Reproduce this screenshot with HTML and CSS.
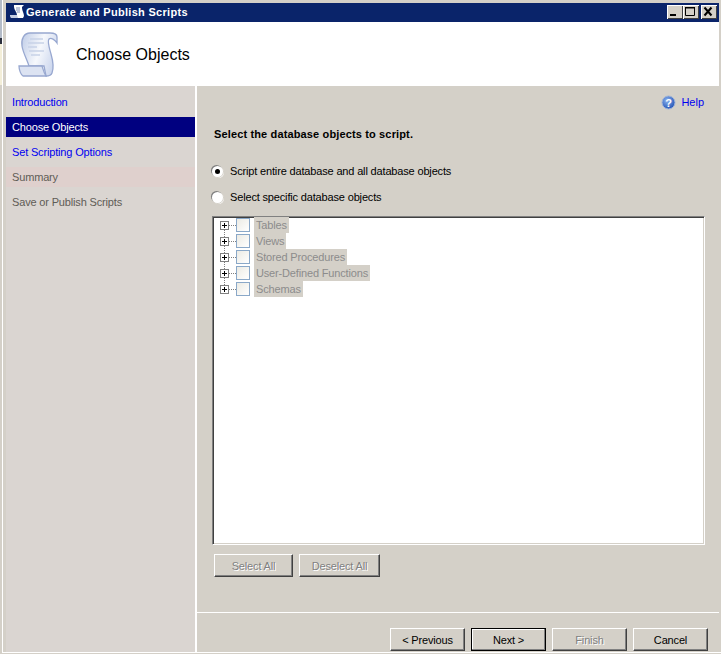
FILE: index.html
```html
<!DOCTYPE html>
<html lang="en">
<head>
<meta charset="utf-8">
<title>Generate and Publish Scripts</title>
<link rel="stylesheet" href="styles.css">
</head>
<body>
<div class="desktop">
  <div class="behind"></div>
  <div class="window">
    <div class="titlebar">
      <svg class="title-icon" width="16" height="16" viewBox="0 0 16 16">
        <path d="M5 1h10l-2 2v1c0 3 2 5 2 8l-1 2H2l-1-3h7c0-3-3-5-3-8z" fill="#fff"/>
        <path d="M7 4h4M7 6h4M8 8h3" stroke="#7f8fb8" stroke-width="1"/>
        <path d="M1 11h7l1 3H2z" fill="#c4cde2"/>
      </svg>
      <span class="title-text">Generate and Publish Scripts</span>
      <div class="window-controls">
        <span class="win-btn">
          <svg width="15" height="13" viewBox="0 0 15 13"><path d="M3 9h6v2H3z" fill="#000"/></svg>
        </span>
        <span class="win-btn">
          <svg width="15" height="13" viewBox="0 0 15 13"><path d="M2.500 2.500h9v8h-9z" fill="none" stroke="#000"/><path d="M2 2h10v1.500H2z" fill="#000"/></svg>
        </span>
        <span class="win-btn win-btn-close">
          <svg width="15" height="13" viewBox="0 0 15 13"><path d="M3.500 2.500l7 8M10.500 2.500l-7 8" stroke="#000" stroke-width="2"/></svg>
        </span>
      </div>
    </div>
    <header class="banner">
      <svg class="banner-icon" width="40" height="45" viewBox="0 0 40 45">
        <defs>
          <linearGradient id="paper" x1="0" y1="0.2" x2="1" y2="0.6">
            <stop offset="0" stop-color="#c6d2ea"/>
            <stop offset="0.5" stop-color="#f6f8fc"/>
            <stop offset="1" stop-color="#c9d4ec"/>
          </linearGradient>
        </defs>
        <path d="M12 1H32C36 1 39 2 39 5V11C37 8 33 5 31 7C29 9 31 15 33 22C35 29 36 36 34 41C33 44 30 44 28 44L26 34H11C9 27 5 21 4 14C3 7 6 1 12 1Z" fill="url(#paper)" stroke="#98a8d0" stroke-width="1.300"/>
        <path d="M1 34H24C25 37 26 41 28 44H5C3 43 1 38 1 34Z" fill="#dce3f2" stroke="#98a8d0" stroke-width="1.300"/>
        <path d="M12 7h13M10 11h16M10 15h9M11 19h15M13 23h9" stroke="#c8d2e8" stroke-width="1.300"/>
      </svg>
      <h1 class="banner-title">Choose Objects</h1>
    </header>
    <div class="content">
      <nav class="sidebar">
        <a class="step step-link">Introduction</a>
        <a class="step step-current">Choose Objects</a>
        <a class="step step-link">Set Scripting Options</a>
        <a class="step step-off step-tint">Summary</a>
        <a class="step step-off">Save or Publish Scripts</a>
      </nav>
      <main class="panel">
        <div class="help-row">
          <svg width="15" height="15" viewBox="0 0 15 15">
            <defs>
              <radialGradient id="helpball" cx="0.4" cy="0.35" r="0.7">
                <stop offset="0" stop-color="#8db4ee"/>
                <stop offset="1" stop-color="#1f4fb4"/>
              </radialGradient>
            </defs>
            <circle cx="7.500" cy="7.500" r="6.500" fill="url(#helpball)" stroke="#9fb4d8"/>
            <text class="help-mark" x="7.500" y="11.500" text-anchor="middle">?</text>
          </svg>
          <a class="help-link">Help</a>
        </div>
        <h2 class="prompt">Select the database objects to script.</h2>
        <label class="radio-row">
          <span class="radio radio-on"></span>Script entire database and all database objects
        </label>
        <label class="radio-row radio-row-second">
          <span class="radio"></span>Select specific database objects
        </label>
        <div class="tree">
          <div class="tree-row"><span class="expander"></span><span class="dots"></span><span class="check"></span><span class="node">Tables</span></div>
          <div class="tree-row"><span class="expander"></span><span class="dots"></span><span class="check"></span><span class="node">Views</span></div>
          <div class="tree-row"><span class="expander"></span><span class="dots"></span><span class="check"></span><span class="node">Stored Procedures</span></div>
          <div class="tree-row"><span class="expander"></span><span class="dots"></span><span class="check"></span><span class="node">User-Defined Functions</span></div>
          <div class="tree-row"><span class="expander"></span><span class="dots"></span><span class="check"></span><span class="node">Schemas</span></div>
        </div>
        <div class="tree-actions">
          <button class="btn btn-off btn-select" disabled>Select All</button>
          <button class="btn btn-off btn-deselect" disabled>Deselect All</button>
        </div>
        <footer class="footer">
          <button class="btn btn-nav">&lt; Previous</button>
          <button class="btn btn-nav btn-default">Next &gt;</button>
          <button class="btn btn-nav btn-off" disabled>Finish</button>
          <button class="btn btn-nav">Cancel</button>
        </footer>
      </main>
    </div>
  </div>
</div>
</body>
</html>
```
FILE: styles.css
```css
* {
  box-sizing: border-box;
}

html,
body {
  margin: 0;
  height: 100%;
  overflow: hidden;
}

body {
  font-family: "Liberation Sans", Arial, sans-serif;
  font-size: 11px;
  letter-spacing: -0.16px;
  color: #000;
  background: #d4d0c8;
}

.desktop {
  display: flex;
  width: 721px;
  height: 654px;
  background: #d4d0c8;
}

.behind {
  flex: 0 0 2px;
  height: 100%;
  background: linear-gradient(#b4bcc8 0, #b4bcc8 38px, #2a2e3c 38px, #2a2e3c 44px, #f3eed8 44px, #f3eed8 85px, #d4d0c8 85px);
}

.window {
  flex: 0 0 719px;
  display: flex;
  flex-direction: column;
  height: 653px;
  padding: 3px 2px 0 3px;
  border-left: 1px solid #fff;
  border-bottom: 1px solid #fff;
  background: #d4d0c8;
}

.titlebar {
  display: flex;
  align-items: center;
  flex: 0 0 19px;
  padding: 0 2px 1px 3px;
  background: #0a246a;
  color: #fff;
}

.title-icon {
  flex: none;
  margin-right: 1px;
}

.title-text {
  font-weight: 700;
  font-size: 11px;
  letter-spacing: 0.3px;
  white-space: nowrap;
}

.window-controls {
  display: flex;
  margin-left: auto;
}

.win-btn {
  display: flex;
  width: 16px;
  height: 14px;
  background: #d4d0c8;
  box-shadow: inset 1px 1px #fff, inset -1px -1px #404040;
}

.win-btn-close {
  margin-left: 2px;
}

.banner {
  display: flex;
  align-items: center;
  flex: 0 0 64px;
  padding-left: 12px;
  background: #fff;
}

.banner-icon {
  flex: none;
}

.banner-title {
  margin: 2px 0 0 18px;
  font-size: 16px;
  font-weight: 400;
  letter-spacing: 0;
}

.content {
  display: flex;
  flex: 1;
  min-height: 0;
}

.sidebar {
  display: flex;
  flex-direction: column;
  flex: 0 0 189px;
  gap: 5px;
  padding-top: 6px;
  background: #dad5d1;
}

.step {
  height: 20px;
  padding-left: 6px;
  line-height: 20px;
  white-space: nowrap;
}

.step-link {
  color: #0000f0;
}

.step-current {
  background: #000080;
  color: #fff;
}

.step-off {
  color: #5f5c56;
}

.step-tint {
  background: #dfd0cd;
}

.panel {
  display: flex;
  flex-direction: column;
  flex: 1;
  min-width: 0;
  border-left: 2px solid #fff;
  background: #d4d0c8;
}

.help-row {
  display: flex;
  align-items: center;
  justify-content: flex-end;
  gap: 5px;
  height: 16px;
  margin-top: 8px;
  padding-right: 15px;
}

.help-mark {
  fill: #fff;
  font-size: 11px;
  font-weight: 700;
}

.help-link {
  color: #0000f0;
  letter-spacing: 0;
}

.prompt {
  margin: 17px 0 0 17px;
  font-size: 11px;
  line-height: 14px;
  font-weight: 700;
  letter-spacing: 0.14px;
}

.radio-row {
  display: flex;
  align-items: center;
  height: 14px;
  margin: 23px 0 0 15px;
  white-space: nowrap;
}

.radio-row-second {
  margin-top: 12px;
}

.radio {
  position: relative;
  flex: none;
  width: 11px;
  height: 11px;
  margin-right: 7px;
  border-radius: 50%;
  background: #fff;
  box-shadow: -1px -1px 0 #808080, 0 0 0 1px #d4d0c8, 1px 1px 0 #fff;
}

.radio-on::after {
  content: "";
  position: absolute;
  left: 3px;
  top: 3px;
  width: 5px;
  height: 5px;
  border-radius: 50%;
  background: #000;
}

.tree {
  display: flex;
  flex-direction: column;
  flex: 0 0 329px;
  margin: 12px 14px 0 15px;
  padding: 0 0 0 7px;
  border: 1px solid;
  border-color: #808080 #fff #fff #808080;
  background: #fff;
  box-shadow: inset 1px 1px #404040, inset -1px -1px #d4d0c8;
}

.tree-row {
  display: flex;
  align-items: center;
  flex: none;
  height: 16px;
}

.expander {
  position: relative;
  flex: none;
  width: 9px;
  height: 9px;
  border: 1px solid #808080;
  background: linear-gradient(#000, #000) center / 5px 1px no-repeat, linear-gradient(#000, #000) center / 1px 5px no-repeat, #fff;
}

.dots {
  flex: none;
  width: 7px;
  height: 1px;
  background: repeating-linear-gradient(90deg, #808080 0 1px, transparent 1px 2px);
}

.tree-row + .tree-row .expander::before {
  content: "";
  position: absolute;
  left: 3px;
  top: -8px;
  width: 1px;
  height: 7px;
  background: repeating-linear-gradient(#808080 0 1px, transparent 1px 2px);
}

.check {
  flex: none;
  width: 14px;
  height: 14px;
  border: 1px solid #8aa8c8;
  background: linear-gradient(135deg, #ecebe4, #fff);
}

.node {
  height: 16px;
  margin-left: 4px;
  padding: 0 2px;
  line-height: 16px;
  background: #d4d0c8;
  color: #8c8c8c;
  white-space: nowrap;
}

.tree-actions {
  display: flex;
  gap: 6px;
  margin: 9px 0 0 17px;
}

.btn {
  height: 23px;
  padding: 0;
  border: 1px solid;
  border-color: #fff #404040 #404040 #fff;
  background: #d4d0c8;
  box-shadow: inset -1px -1px #808080;
  color: #000;
  font: 11px "Liberation Sans", Arial, sans-serif;
  letter-spacing: -0.16px;
}

.btn-off {
  color: #808080;
  text-shadow: 1px 1px #fff;
}

.btn-select {
  width: 79px;
}

.btn-deselect {
  width: 81px;
}

.footer {
  display: flex;
  justify-content: flex-end;
  gap: 6px;
  margin-top: 35px;
  padding: 15px 11px 0 0;
  border-top: 1px solid #fff;
}

.btn-nav {
  width: 75px;
}

.btn-default {
  outline: 1px solid #000;
  outline-offset: -1px;
  box-shadow: inset -1px -1px #808080, inset 1px 1px #fff;
}
```
